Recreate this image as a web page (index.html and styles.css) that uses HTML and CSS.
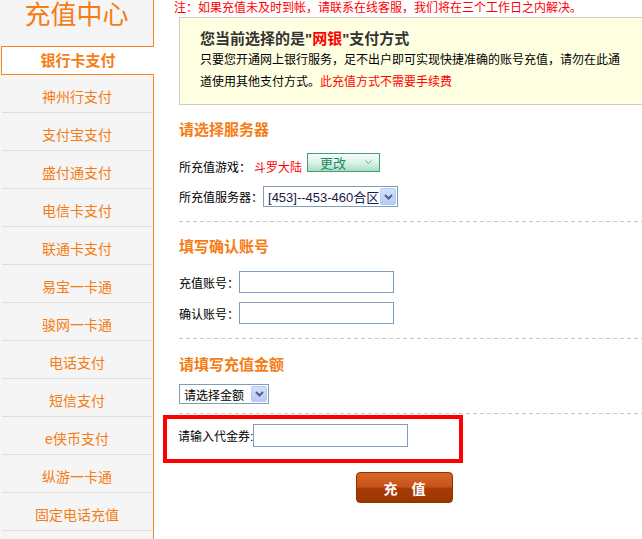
FILE: index.html
```html
<!DOCTYPE html>
<html lang="zh-CN">
<head>
    <meta charset="UTF-8">
    <meta name="viewport" content="width=device-width, initial-scale=1.0">
    <title>充值中心</title>
    <link rel="stylesheet" href="styles.css">
</head>
<body>
    <div class="wrap">
        <div class="side">
            <div class="side-title">充值中心</div>
            <ul class="menu">
                <li class="on"><a href="#">银行卡支付</a></li>
                <li><a href="#">神州行支付</a></li>
                <li><a href="#">支付宝支付</a></li>
                <li><a href="#">盛付通支付</a></li>
                <li><a href="#">电信卡支付</a></li>
                <li><a href="#">联通卡支付</a></li>
                <li><a href="#">易宝一卡通</a></li>
                <li><a href="#">骏网一卡通</a></li>
                <li><a href="#">电话支付</a></li>
                <li><a href="#">短信支付</a></li>
                <li><a href="#">e侠币支付</a></li>
                <li><a href="#">纵游一卡通</a></li>
                <li><a href="#">固定电话充值</a></li>
            </ul>
        </div>

        <div class="main">
            <p class="note">注：如果充值未及时到帐，请联系在线客服，我们将在三个工作日之内解决。</p>

            <div class="tip">
                <h3>您当前选择的是"<span class="red">网银</span>"支付方式</h3>
                <p>只要您开通网上银行服务，足不出户即可实现快捷准确的账号充值，请勿在此通道使用其他支付方式。<span class="red">此充值方式不需要手续费</span></p>
            </div>

            <!-- 服务器 -->
            <h4 class="title t1">请选择服务器</h4>
            <div class="row row-game">
                <span class="label">所充值游戏：</span>
                <span class="game">斗罗大陆</span>
                <button class="btn-change" type="button">更改<svg width="7" height="5" viewBox="0 0 7 5"><path d="M0.5 0.5l3 3 3-3" stroke="#6a9a86" fill="none"/></svg></button>
            </div>
            <div class="row row-server">
                <span class="label">所充值服务器：</span>
                <div class="select sel-server">
                    <span class="sel-val">[453]--453-460合区</span>
                    <span class="sel-btn"><svg width="9" height="6" viewBox="0 0 9 6"><path d="M1 1l3.5 3.5L8 1" stroke="#4d6185" stroke-width="2" fill="none"/></svg></span>
                </div>
            </div>
            <div class="dash d1"></div>

            <!-- 账号 -->
            <h4 class="title t2">填写确认账号</h4>
            <div class="row row-acc1">
                <span class="label">充值账号：</span>
                <input class="txt" type="text">
            </div>
            <div class="row row-acc2">
                <span class="label">确认账号：</span>
                <input class="txt" type="text">
            </div>
            <div class="dash d2"></div>

            <!-- 金额 -->
            <h4 class="title t3">请填写充值金额</h4>
            <div class="select sel-money">
                <span class="sel-val">请选择金额</span>
                <span class="sel-btn"><svg width="9" height="6" viewBox="0 0 9 6"><path d="M1 1l3.5 3.5L8 1" stroke="#4d6185" stroke-width="2" fill="none"/></svg></span>
            </div>
            <div class="dash d3"></div>

            <div class="coupon">
                <span class="label">请输入代金券:</span>
                <input class="txt txt-coupon" type="text">
            </div>

            <button class="btn-pay" type="button">充　值</button>
        </div>
    </div>
</body>
</html>
```

FILE: styles.css
```css
body {
    margin: 0;
    padding: 0;
    font-family: "Liberation Sans", "Noto Sans CJK SC", sans-serif;
    font-size: 12px;
    background-color: #fff;
    color: #000;
}

.wrap {
    display: flex;
    min-height: 100vh;
}

/* 左侧菜单 */
.side {
    width: 153px;
    flex-shrink: 0;
    background-color: #f5f5f5;
    border-right: 1px solid #f7861c;
}

.side-title {
    height: 46px;
    line-height: 30px;
    text-align: center;
    font-size: 26px;
    color: #f67c14;
}

.menu {
    list-style: none;
    margin: 0;
    padding: 0;
}

.menu li {
    margin: 0 1px 0 2px;
    height: 29px;
    padding-top: 8px;
    line-height: 29px;
    border-bottom: 1px solid #dedede;
    text-align: center;
    font-size: 14px;
}

.menu li a {
    color: #f67c14;
    text-decoration: none;
}

.menu li.on {
    margin: 0 -1px 0 1px;
    height: 27px;
    padding: 0;
    line-height: 27px;
    border: 1px solid #f7861c;
    border-right: 0;
    background-color: #fff;
}

.menu li.on a {
    font-weight: bold;
    font-size: 15px;
}

/* 右侧内容 */
.main {
    flex: 1;
    min-width: 0;
    overflow: hidden;
    padding-left: 25px;
}

.red {
    color: #f00;
}

.note {
    margin: 0 0 0 -5px;
    line-height: 17px;
    color: #f00;
    white-space: nowrap;
}

.tip {
    width: 500px;
    border: 1px solid #cccccc;
    background-color: #ffffe2;
    padding: 11px 0 11px 20px;
}

.tip h3 {
    margin: 0;
    font-size: 15px;
    line-height: 20px;
    color: #333;
}

.tip p {
    margin: 0;
    width: 425px;
    line-height: 22px;
}

.title {
    margin: 0;
    font-size: 15px;
    line-height: 20px;
    color: #f67c14;
}

.t1 { margin-top: 15px; }
.t2 { margin-top: 15px; }
.t3 { margin-top: 16px; }

.row {
    display: flex;
    align-items: center;
}

.label {
    white-space: nowrap;
}

.row-game {
    margin-top: 16px;
    height: 20px;
}

.game {
    margin-left: 3px;
    color: #f00;
}

.btn-change {
    display: flex;
    align-items: center;
    margin: -8px 0 0 5px;
    width: 73px;
    height: 19px;
    padding: 0 0 0 12px;
    border: 1px solid #3f9f7c;
    background: linear-gradient(#f7fdfa, #dcf3e8 50%, #aadcc5);
    font-family: "Noto Sans CJK SC", sans-serif;
    font-size: 13px;
    line-height: 17px;
    color: #1d8a5e;
    cursor: pointer;
}

.btn-change svg {
    margin-left: 19px;
}

.row-server {
    margin-top: 10px;
    height: 21px;
}

.select {
    display: flex;
    align-items: center;
    box-sizing: border-box;
    border: 1px solid #7f9db9;
    background-color: #fff;
    padding: 1px;
}

.sel-val {
    flex: 1;
    padding-left: 3px;
    white-space: nowrap;
}

.sel-btn {
    display: flex;
    align-items: center;
    justify-content: center;
    box-sizing: border-box;
    width: 16px;
    height: 100%;
    border: 1px solid #b9caf2;
    border-radius: 2px;
    background: linear-gradient(#d3e0fd, #b7caf6);
}

.sel-server {
    width: 135px;
    height: 21px;
    font-size: 13px;
    color: #1a1a4a;
}

.sel-money {
    margin-top: 9px;
    width: 90px;
    height: 20px;
}

.dash {
    height: 1px;
    background: repeating-linear-gradient(90deg, #c8c8c8 0, #c8c8c8 4px, transparent 4px, transparent 7px);
}

.d1 { margin-top: 14px; }
.d2 { margin-top: 14px; }
.d3 { margin-top: 9px; }

.txt {
    box-sizing: border-box;
    width: 155px;
    height: 22px;
    margin: 0;
    padding: 0 3px;
    border: 1px solid #7f9db9;
    font-size: 12px;
}

.row-acc1 { margin-top: 14px; }
.row-acc2 { margin-top: 9px; }

.coupon {
    display: flex;
    align-items: center;
    width: 281px;
    height: 32px;
    margin: 1px 0 0 -16px;
    padding: 0 0 8px 11px;
    border: 4px solid #f00;
}

.txt-coupon {
    height: 23px;
}

.btn-pay {
    display: block;
    width: 97px;
    height: 31px;
    margin: 9px 0 0 177px;
    padding: 0;
    border: 1px solid #8b3200;
    border-radius: 4px;
    background: linear-gradient(#d86627, #c8531a 48%, #a83c05 52%, #9c3600);
    color: #fff;
    font-family: "Noto Sans CJK SC", sans-serif;
    font-size: 14px;
    font-weight: bold;
    cursor: pointer;
}
```
